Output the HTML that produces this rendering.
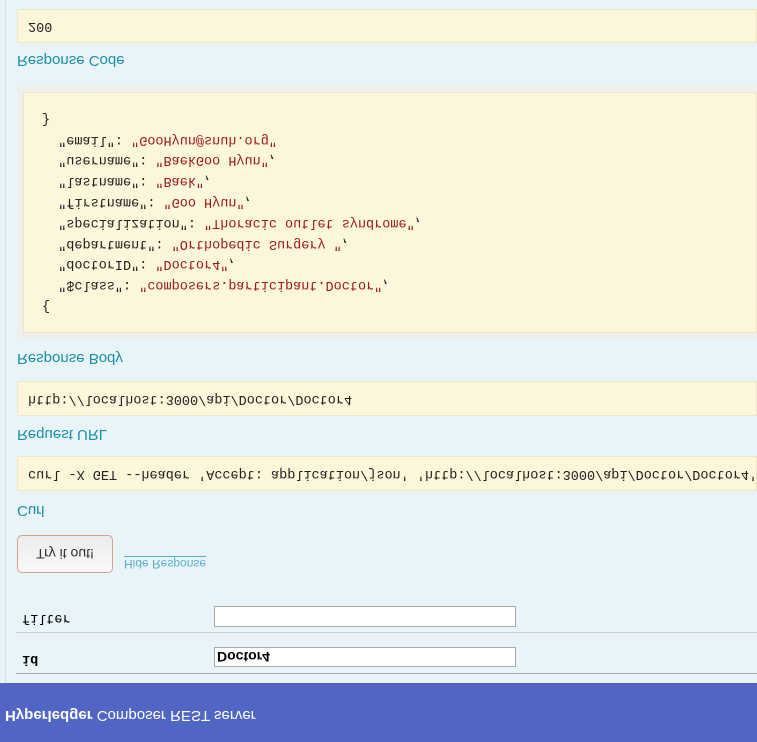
<!DOCTYPE html>
<html><head><meta charset="utf-8"><style>
html,body{margin:0;padding:0;width:757px;height:742px;overflow:hidden;background:#fff}
#w{position:absolute;left:0;top:0;width:757px;height:742px;transform:scaleY(-1);background:#e8f4f8;font-family:"Liberation Sans",Arial,sans-serif}
.a{position:absolute}
.box{position:absolute;background:#fcf6db;border:1px solid #efe6c4;box-sizing:border-box;font-family:"Liberation Mono",monospace;font-size:13.5px;color:#222;padding-left:10px;line-height:33px;white-space:pre}
.lbl{position:absolute;left:17px;font-size:15px;color:#1a8fa6}
.s{color:#9a1a1a}
</style></head><body><div id="w">
<div class="a" style="left:0;top:0;width:757px;height:59px;background:#5166c4"></div>
<div class="a" style="left:5px;top:18px;color:#fff;font-size:15px"><b>Hyperledger</b> Composer REST server</div>
<div class="a" style="left:5px;top:59px;width:1px;height:683px;background:#cfe3ec"></div>
<div class="a" style="left:16px;top:68px;width:741px;height:1px;background:#aaa"></div>
<div class="a" style="left:22px;top:76px;font-family:'Liberation Mono',monospace;font-weight:bold;font-size:13.5px">id</div>
<div class="a" style="left:214px;top:75px;width:302px;height:20px;background:#fff;border:1px solid #aaa;box-sizing:border-box;font-weight:bold;font-size:14px;padding-left:2px;line-height:18px">Doctor4</div>
<div class="a" style="left:16px;top:109px;width:741px;height:1px;background:#ccc"></div>
<div class="a" style="left:22px;top:117px;font-family:'Liberation Mono',monospace;font-size:13.5px">filter</div>
<div class="a" style="left:214px;top:115px;width:302px;height:21px;background:#fff;border:1px solid #aaa;box-sizing:border-box"></div>
<div class="a" style="left:17px;top:169px;width:96px;height:38px;border:1px solid #d9a08c;border-radius:5px;box-sizing:border-box;background:linear-gradient(#f9f9f9,#ececec);font-size:14px;color:#333;text-align:center;line-height:36px">Try it out!</div>
<div class="a" style="left:124px;top:172px;font-size:12px;color:#5ab0c8;border-bottom:1px solid #5ab0c8;line-height:13px">Hide Response</div>
<div class="lbl" style="top:223px">Curl</div>
<div class="box" style="left:17px;top:251px;width:740px;height:35px">curl -X GET --header 'Accept: application/json' 'http://localhost:3000/api/Doctor/Doctor4'</div>
<div class="lbl" style="top:299px">Request URL</div>
<div class="box" style="left:17px;top:326px;width:740px;height:35px">http://localhost:3000/api/Doctor/Doctor4</div>
<div class="lbl" style="top:375px">Response Body</div>
<div class="a" style="left:17px;top:403px;width:740px;height:253px;background:#efefef"></div>
<div class="box" style="left:23px;top:409px;width:734px;height:241px;line-height:20.8px;padding:17px 0 0 18px">{
  "$class": <span class="s">"composers.participant.Doctor"</span>,
  "doctorID": <span class="s">"Doctor4"</span>,
  "department": <span class="s">"Orthopedic Surgery "</span>,
  "specialization": <span class="s">"Thoracic outlet syndrome"</span>,
  "firstname": <span class="s">"Goo Hyun"</span>,
  "lastname": <span class="s">"Baek"</span>,
  "username": <span class="s">"BaekGoo Hyun"</span>,
  "email": <span class="s">"GooHyun@snuh.org"</span>
}</div>
<div class="lbl" style="top:673px">Response Code</div>
<div class="box" style="left:17px;top:699px;width:740px;height:34px">200</div>
</div></body></html>
